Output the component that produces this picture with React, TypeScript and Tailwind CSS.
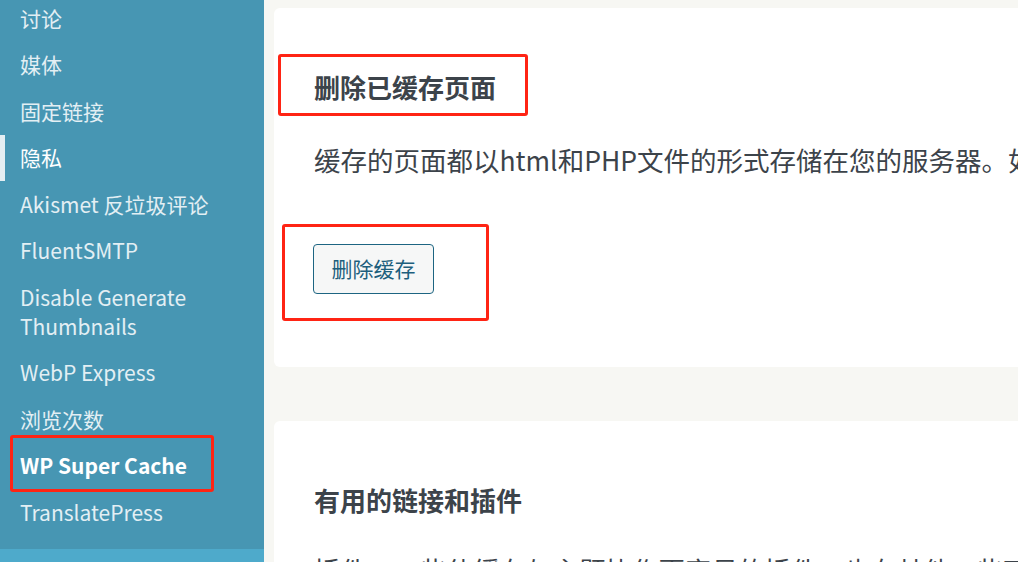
const menuItems = [
  { label: "讨论" },
  { label: "媒体" },
  { label: "固定链接" },
  { label: "隐私", active: true },
  { label: "Akismet 反垃圾评论" },
  { label: "FluentSMTP" },
  { label: "Disable Generate Thumbnails" },
  { label: "WebP Express" },
  { label: "浏览次数" },
  { label: "WP Super Cache", current: true },
  { label: "TranslatePress" },
];

const fontStack = "font-['Noto_Sans_CJK_SC','Noto_Sans',sans-serif]";

export default function App() {
  return (
    <div className={`relative flex h-[562px] w-[1018px] overflow-hidden bg-[#f7f7f3] ${fontStack}`}>
      {/* admin sidebar */}
      <aside className="flex w-[264px] shrink-0 flex-col bg-[#4796b3]">
        <ul className="-mt-[5px] flex flex-col">
          {menuItems.map((item) => (
            <li
              key={item.label}
              className={`relative w-[230px] py-[8.75px] pl-5 text-[21px] leading-[29px] ${
                item.current
                  ? "font-bold text-white"
                  : item.active
                    ? "text-white"
                    : "text-[#e3eff4]"
              }`}
            >
              {item.active && (
                <span className="absolute left-0 top-0 h-full w-[5px] bg-[#e4eef3]" />
              )}
              {item.label}
            </li>
          ))}
        </ul>
        <div className="mt-[13px] h-[40px] bg-[#4eaacb]" />
      </aside>

      {/* main content */}
      <main className="flex-1 pl-[10px] pt-2">
        <section className="w-[800px] rounded-md bg-white pb-[73px] pl-10 pt-[61px] text-[#3c434a]">
          <h2 className="text-[26px] font-bold leading-[36px]">删除已缓存页面</h2>
          <p className="mt-[37px] whitespace-nowrap text-[26.5px] leading-[36px]">
            缓存的页面都以html和PHP文件的形式存储在您的服务器。如果您需要删除它们，请使用下面的按钮。
          </p>
          <button className="-ml-px mt-[66px] h-[50px] w-[121px] rounded-[4px] border border-[#1d6582] bg-[#f6f7f7] text-[21px] text-[#1d5f7d]">
            删除缓存
          </button>
        </section>

        <section className="mt-[54px] w-[800px] rounded-md bg-white pb-10 pl-10 pt-[61px] text-[#3c434a]">
          <h2 className="text-[26px] font-bold leading-[36px]">有用的链接和插件</h2>
          <p className="mt-[34px] whitespace-nowrap text-[26.5px] leading-[36px]">
            插件：一些使缓存与主题协作更容易的插件，也有其他一些可能有用的链接。
          </p>
        </section>
      </main>

      {/* red annotation boxes */}
      <div className="pointer-events-none absolute left-[10px] top-[435px] h-[57px] w-[204px] rounded-[3px] border-[3px] border-[#ff2414]" />
      <div className="pointer-events-none absolute left-[278px] top-[54px] h-[62px] w-[250px] rounded-[3px] border-[3px] border-[#ff2414]" />
      <div className="pointer-events-none absolute left-[282px] top-[224px] h-[97px] w-[207px] rounded-[3px] border-[3px] border-[#ff2414]" />
    </div>
  );
}
